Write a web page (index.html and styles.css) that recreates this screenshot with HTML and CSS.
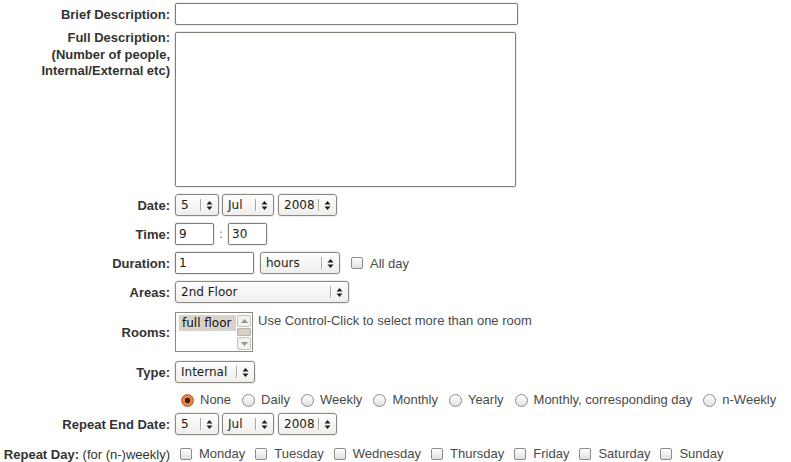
FILE: index.html
```html
<!DOCTYPE html>
<html>
<head>
<meta charset="utf-8">
<title>Booking</title>
<link rel="stylesheet" href="styles.css">
</head>
<body>
<form class="form">
  <div class="lbl">Brief Description:</div>
  <div class="field"><input class="text brief" type="text"></div>

  <div class="lbl top">Full Description:<br>(Number of people,<br>Internal/External etc)</div>
  <div class="field"><textarea class="text area"></textarea></div>

  <div class="lbl">Date:</div>
  <div class="field gap3">
    <div class="sel w-day"><span class="val">5</span><span class="arr"><svg width="7" height="11" viewBox="0 0 7 11"><polygon points="0.5,4.5 3.5,1 6.5,4.5"/><polygon points="0.5,6.5 3.5,10 6.5,6.5"/></svg></span></div>
    <div class="sel w-mon"><span class="val">Jul</span><span class="arr"><svg width="7" height="11" viewBox="0 0 7 11"><polygon points="0.5,4.5 3.5,1 6.5,4.5"/><polygon points="0.5,6.5 3.5,10 6.5,6.5"/></svg></span></div>
    <div class="sel w-year"><span class="val">2008</span><span class="arr"><svg width="7" height="11" viewBox="0 0 7 11"><polygon points="0.5,4.5 3.5,1 6.5,4.5"/><polygon points="0.5,6.5 3.5,10 6.5,6.5"/></svg></span></div>
  </div>

  <div class="lbl">Time:</div>
  <div class="field">
    <input class="text w-time" type="text" value="9">
    <span class="colon">:</span>
    <input class="text w-time" type="text" value="30">
  </div>

  <div class="lbl">Duration:</div>
  <div class="field">
    <input class="text w-dur" type="text" value="1">
    <div class="sel w-unit"><span class="val">hours</span><span class="arr"><svg width="7" height="11" viewBox="0 0 7 11"><polygon points="0.5,4.5 3.5,1 6.5,4.5"/><polygon points="0.5,6.5 3.5,10 6.5,6.5"/></svg></span></div>
    <label class="check-item allday"><span class="cb"></span>All day</label>
  </div>

  <div class="lbl">Areas:</div>
  <div class="field">
    <div class="sel w-area"><span class="val">2nd Floor</span><span class="arr"><svg width="7" height="11" viewBox="0 0 7 11"><polygon points="0.5,4.5 3.5,1 6.5,4.5"/><polygon points="0.5,6.5 3.5,10 6.5,6.5"/></svg></span></div>
  </div>

  <div class="lbl">Rooms:</div>
  <div class="field rooms">
    <div class="listbox">
      <div class="items"><div class="item">full floor</div></div>
      <div class="sb">
        <span class="sb-btn"><svg width="7" height="4" viewBox="0 0 7 4"><polygon points="0,4 3.5,0 7,4"/></svg></span>
        <span class="sb-thumb"></span>
        <span class="sb-btn down"><svg width="7" height="4" viewBox="0 0 7 4"><polygon points="0,0 3.5,4 7,0"/></svg></span>
      </div>
    </div>
    <span class="hint">Use Control-Click to select more than one room</span>
  </div>

  <div class="lbl">Type:</div>
  <div class="field">
    <div class="sel w-type"><span class="val">Internal</span><span class="arr"><svg width="7" height="11" viewBox="0 0 7 11"><polygon points="0.5,4.5 3.5,1 6.5,4.5"/><polygon points="0.5,6.5 3.5,10 6.5,6.5"/></svg></span></div>
  </div>

  <div class="lbl"></div>
  <div class="field choices radios">
    <label class="opt"><span class="radio on"></span>None</label>
    <label class="opt"><span class="radio"></span>Daily</label>
    <label class="opt"><span class="radio"></span>Weekly</label>
    <label class="opt"><span class="radio"></span>Monthly</label>
    <label class="opt"><span class="radio"></span>Yearly</label>
    <label class="opt"><span class="radio"></span>Monthly, corresponding day</label>
    <label class="opt"><span class="radio"></span>n-Weekly</label>
  </div>

  <div class="lbl">Repeat End Date:</div>
  <div class="field gap3">
    <div class="sel w-day"><span class="val">5</span><span class="arr"><svg width="7" height="11" viewBox="0 0 7 11"><polygon points="0.5,4.5 3.5,1 6.5,4.5"/><polygon points="0.5,6.5 3.5,10 6.5,6.5"/></svg></span></div>
    <div class="sel w-mon"><span class="val">Jul</span><span class="arr"><svg width="7" height="11" viewBox="0 0 7 11"><polygon points="0.5,4.5 3.5,1 6.5,4.5"/><polygon points="0.5,6.5 3.5,10 6.5,6.5"/></svg></span></div>
    <div class="sel w-year"><span class="val">2008</span><span class="arr"><svg width="7" height="11" viewBox="0 0 7 11"><polygon points="0.5,4.5 3.5,1 6.5,4.5"/><polygon points="0.5,6.5 3.5,10 6.5,6.5"/></svg></span></div>
  </div>

  <div class="lbl last">Repeat Day: <span class="norm">(for (n-)weekly)</span></div>
  <div class="field choices days last">
    <label class="opt"><span class="cb"></span>Monday</label>
    <label class="opt"><span class="cb"></span>Tuesday</label>
    <label class="opt"><span class="cb"></span>Wednesday</label>
    <label class="opt"><span class="cb"></span>Thursday</label>
    <label class="opt"><span class="cb"></span>Friday</label>
    <label class="opt"><span class="cb"></span>Saturday</label>
    <label class="opt"><span class="cb"></span>Sunday</label>
  </div>
</form>
</body>
</html>
```

FILE: styles.css
```css
* { box-sizing: border-box; }
html, body { margin: 0; padding: 0; background: #fff; }
body {
  padding-top: 3px;
  font-family: "Liberation Sans", Arial, sans-serif;
  font-size: 13px;
  color: #4a4a4a;
}
.form {
  display: grid;
  grid-template-columns: 170px 1fr;
  column-gap: 5px;
  row-gap: 7px;
  align-items: center;
}
.lbl {
  text-align: right;
  font-weight: bold;
  color: #333;
  white-space: nowrap;
  line-height: 15px;
}
.lbl.top { align-self: start; line-height: 16.5px; margin-top: -2px; }
.lbl .norm { font-weight: normal; }
.last { margin-top: 4px; }
.field { display: flex; align-items: center; }
.gap3 { gap: 3px; }

.text {
  height: 22px;
  border: 1px solid #827e78;
  border-radius: 2px;
  box-shadow: 0 0 0 1px #ecebe8;
  background: #fff;
  font: 12px "DejaVu Sans", sans-serif;
  color: #1a1a1a;
  padding: 0 3px;
  margin: 0;
  outline: none;
}
.brief { width: 343px; }
.area { width: 341px; height: 155px; resize: none; display: block; }
.w-time { width: 39px; }
.w-dur { width: 79px; }
.colon { width: 14px; text-align: center; color: #777; font: 12px "DejaVu Sans", sans-serif; }

.sel {
  display: flex;
  align-items: stretch;
  height: 22px;
  border: 1px solid #8b8782;
  border-radius: 3px;
  box-shadow: 0 0 0 1px #efeeeb;
  background: linear-gradient(#fefefe, #efeeec);
  font: 12px "DejaVu Sans", sans-serif;
  color: #1a1a1a;
}
.sel .val { flex: 1; padding-left: 5px; line-height: 20px; white-space: nowrap; }
.sel .arr {
  width: 18px;
  display: flex;
  align-items: center;
  justify-content: center;
  position: relative;
}
.sel .arr::before {
  content: "";
  position: absolute;
  left: 0;
  top: 4px;
  bottom: 4px;
  border-left: 1px solid #aaa6a0;
  box-shadow: 1px 0 0 #fff;
}
.sel svg { fill: #1f1f1f; margin-left: 1px; }
.w-day { width: 44px; }
.w-mon { width: 52px; }
.w-year { width: 59px; margin-left: 1px; }
.w-unit { width: 80px; margin-left: 6px; }
.w-area { width: 174px; }
.w-type { width: 80px; }

.check-item { display: flex; align-items: center; gap: 7px; color: #4a4a4a; }
.allday { margin-left: 11px; }

.cb {
  width: 12px;
  height: 12px;
  border: 1px solid #8e8a84;
  border-radius: 2px;
  background: linear-gradient(#ffffff, #e2e0dd);
  flex: none;
}
.radio {
  width: 13px;
  height: 13px;
  border: 1px solid #8e8a84;
  border-radius: 50%;
  background: linear-gradient(#ffffff, #e4e2df);
  flex: none;
}
.radio.on {
  border-color: #b9592a;
  background: radial-gradient(circle, #3a2313 0 2.3px, #ee7f3c 3px);
}

.rooms { align-items: center; gap: 5px; }
.listbox {
  width: 78px;
  height: 40px;
  border: 1px solid #8d8983;
  background: #fff;
  display: flex;
  gap: 1px;
  padding: 2px 1px 1px 3px;
  margin: 2px 0;
}
.items { width: 57px; }
.item {
  background: #d9d2ca;
  font: 12px "DejaVu Sans", sans-serif;
  color: #111;
  line-height: 16px;
  padding-left: 3px;
  white-space: nowrap;
}
.sb { width: 14px; display: flex; flex-direction: column; gap: 1px; }
.sb-btn {
  height: 12px;
  border: 1px solid #c6c2bc;
  border-radius: 2px;
  background: #f3f1ef;
  display: flex;
  align-items: center;
  justify-content: center;
  fill: #9a968f;
}
.sb-btn.down { height: 13px; }
.sb-thumb {
  height: 8px;
  border: 1px solid #b9b3ac;
  border-radius: 1px;
  background: #d7d1ca;
}
.hint { align-self: flex-start; margin-top: 3px; color: #4a4a4a; line-height: 15px; }

.choices { padding-left: 6px; gap: 11px; line-height: 16px; }
.radios { margin-top: 2px; margin-bottom: -2px; }
.opt { display: flex; align-items: center; gap: 6px; white-space: nowrap; }
.days { padding-left: 5px; gap: 10px; }
.days .opt { gap: 7px; }
```
